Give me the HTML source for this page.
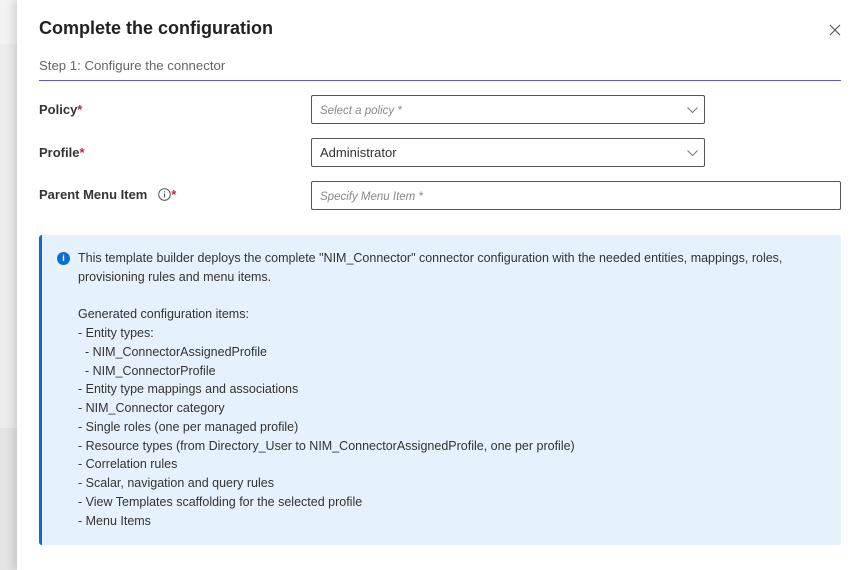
<!DOCTYPE html>
<html><head><meta charset="utf-8"><style>
*{margin:0;padding:0;box-sizing:border-box}
body{width:862px;height:570px;overflow:hidden;font-family:"Liberation Sans",sans-serif;background:#fff;position:relative;color:#333}
.bg1{position:absolute;left:0;top:0;width:20px;height:44px;background:#f3f3f3}
.bg2{position:absolute;left:0;top:44px;width:20px;height:384px;background:#ececec}
.bg3{position:absolute;left:0;top:428px;width:20px;height:142px;background:#e4e4e4}
.panel{position:absolute;left:17px;top:0;width:845px;height:570px;background:#fff;box-shadow:-4px 0 8px rgba(0,0,0,.12)}
h1{position:absolute;left:22px;top:18px;font-size:18px;font-weight:bold;color:#222}
.close{position:absolute;left:812px;top:24px}
.step{position:absolute;left:22px;top:58px;font-size:13.2px;color:#666}
.line{position:absolute;left:22px;top:80px;width:802px;height:1px;background:#5b57d1}
.lbl{position:absolute;left:22px;font-size:13px;font-weight:bold;color:#333}
.lbl span{color:#c0283e}
.inp{position:absolute;left:294px;height:29px;border:1px solid #555;border-radius:2px;font-size:13px;padding:0 8px;line-height:27px}
.ph{font-style:italic;color:#888;font-size:11.5px}
.chev{position:absolute;right:6px;top:11px}
.info{position:absolute;left:22px;top:235px;width:802px;height:310px;background:#e5f1fc;border-left:3px solid #0a6ed1;border-radius:3px}
.info .ic{position:absolute;left:15px;top:17px;width:13px;height:13px;border-radius:50%;background:#0a6ed1;color:#fff;font-size:9px;font-weight:bold;text-align:center;line-height:13px}
.info pre{position:absolute;left:36px;top:14px;font-family:"Liberation Sans",sans-serif;font-size:12.5px;line-height:18.75px;color:#333;white-space:pre}
</style></head><body>
<div class="bg1"></div><div class="bg2"></div><div class="bg3"></div>
<div class="panel">
<h1>Complete the configuration</h1>
<svg class="close" width="12" height="12" viewBox="0 0 12 12"><path d="M1 1L11 11M11 1L1 11" stroke="#555" stroke-width="1.2"/></svg>
<div class="step">Step 1: Configure the connector</div>
<div class="line"></div>
<div class="lbl" style="top:102px">Policy<span>*</span></div>
<div class="lbl" style="top:145px">Profile<span>*</span></div>
<div class="lbl" style="top:187px">Parent Menu Item &nbsp;&nbsp;<svg width="13" height="13" viewBox="0 0 13 13" style="vertical-align:-2px"><circle cx="6.5" cy="6.5" r="5.8" fill="none" stroke="#555" stroke-width="1"/><path d="M6.5 5.5v4M6.5 3.3v1" stroke="#555" stroke-width="1.1"/></svg><span>*</span></div>
<div class="inp" style="top:95px;width:394px"><span class="ph">Select a policy *</span><svg class="chev" width="11" height="7" viewBox="0 0 11 7"><path d="M.5.5l5 5 5-5" fill="none" stroke="#777"/></svg></div>
<div class="inp" style="top:138px;width:394px">Administrator<svg class="chev" width="11" height="7" viewBox="0 0 11 7"><path d="M.5.5l5 5 5-5" fill="none" stroke="#777"/></svg></div>
<div class="inp" style="top:181px;width:530px"><span class="ph">Specify Menu Item *</span></div>
<div class="info"><div class="ic">i</div><pre>This template builder deploys the complete "NIM_Connector" connector configuration with the needed entities, mappings, roles,
provisioning rules and menu items.

Generated configuration items:
- Entity types:
  - NIM_ConnectorAssignedProfile
  - NIM_ConnectorProfile
- Entity type mappings and associations
- NIM_Connector category
- Single roles (one per managed profile)
- Resource types (from Directory_User to NIM_ConnectorAssignedProfile, one per profile)
- Correlation rules
- Scalar, navigation and query rules
- View Templates scaffolding for the selected profile
- Menu Items</pre></div>
</div>
</body></html>
